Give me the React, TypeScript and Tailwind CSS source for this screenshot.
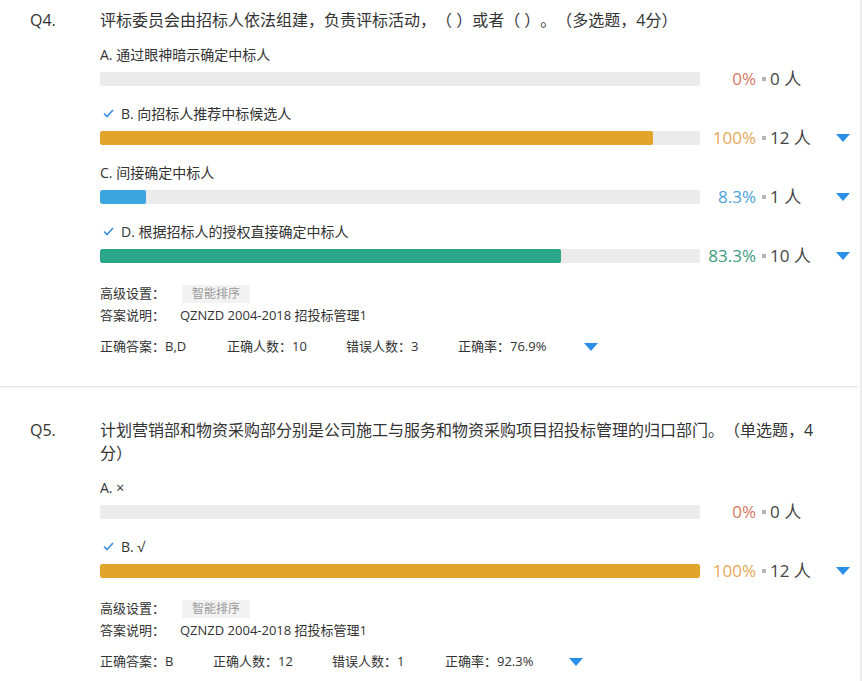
import { Fragment } from 'react'

type Option = {
  label: string
  correct: boolean
  fill: number
  barColor: string
  pct: string
  pctColor: string
  count: number
}

type Question = {
  no: string
  title: string
  options: Option[]
  answer: string
  stats: { text: string; w: string }[]
}

const questions: Question[] = [
  {
    no: 'Q4.',
    title: '评标委员会由招标人依法组建，负责评标活动，（ ）或者（ ）。（多选题，4分）',
    options: [
      { label: 'A. 通过眼神暗示确定中标人', correct: false, fill: 0, barColor: 'bg-[#e3a42b]', pct: '0%', pctColor: 'text-[#d6795f]', count: 0 },
      { label: 'B. 向招标人推荐中标候选人', correct: true, fill: 553, barColor: 'bg-[#e3a42b]', pct: '100%', pctColor: 'text-[#e6a85a]', count: 12 },
      { label: 'C. 间接确定中标人', correct: false, fill: 46, barColor: 'bg-[#3aa6dd]', pct: '8.3%', pctColor: 'text-[#4ba1d9]', count: 1 },
      { label: 'D. 根据招标人的授权直接确定中标人', correct: true, fill: 461, barColor: 'bg-[#2aa68a]', pct: '83.3%', pctColor: 'text-[#3a9c80]', count: 10 },
    ],
    answer: 'QZNZD 2004-2018 招投标管理1',
    stats: [
      { text: '正确答案：B,D', w: 'w-[127px]' },
      { text: '正确人数：10', w: 'w-[119px]' },
      { text: '错误人数：3', w: 'w-[112px]' },
      { text: '正确率：76.9%', w: 'w-[126px]' },
    ],
  },
  {
    no: 'Q5.',
    title: '计划营销部和物资采购部分别是公司施工与服务和物资采购项目招投标管理的归口部门。（单选题，4分）',
    options: [
      { label: 'A. ×', correct: false, fill: 0, barColor: 'bg-[#e3a42b]', pct: '0%', pctColor: 'text-[#d6795f]', count: 0 },
      { label: 'B. √', correct: true, fill: 600, barColor: 'bg-[#e3a42b]', pct: '100%', pctColor: 'text-[#e6a85a]', count: 12 },
    ],
    answer: 'QZNZD 2004-2018 招投标管理1',
    stats: [
      { text: '正确答案：B', w: 'w-[113px]' },
      { text: '正确人数：12', w: 'w-[119px]' },
      { text: '错误人数：1', w: 'w-[113px]' },
      { text: '正确率：92.3%', w: 'w-[124px]' },
    ],
  },
]

function CheckMark() {
  return (
    <svg width="11" height="9" viewBox="0 0 11 9" className="mr-[7px] ml-[3px]">
      <polyline points="1,4.5 4,7.5 10,1" fill="none" stroke="#3d8fe0" strokeWidth="1.7" />
    </svg>
  )
}

function Caret() {
  return (
    <svg width="14" height="8" viewBox="0 0 14 8">
      <polygon points="0,0 14,0 7,8" fill="#2b8fe8" />
    </svg>
  )
}

function OptionRow({ o, first }: { o: Option; first: boolean }) {
  return (
    <div className={first ? '' : 'mt-[9px]'}>
      <div className="flex items-center h-5 text-[14px] text-[#333]">
        {o.correct && <CheckMark />}
        <span>{o.label}</span>
      </div>
      <div className="flex items-center h-[30px]">
        <div className="w-[600px] h-[14px] bg-[#ebebeb] rounded-[2px] overflow-hidden">
          {o.fill > 0 && <div className={`h-full rounded-[2px] ${o.barColor}`} style={{ width: o.fill }} />}
        </div>
        <span className={`w-[56px] text-right text-[17px] ${o.pctColor}`}>{o.pct}</span>
        <span className="ml-[6px] w-[4px] h-[4px] bg-[#b5b5b5]" />
        <span className="ml-[4px] w-[66px] text-[17px] text-[#444]">{o.count} 人</span>
        {o.count > 0 && <Caret />}
      </div>
    </div>
  )
}

function QuestionBlock({ q }: { q: Question }) {
  return (
    <div className="flex pl-[30px]">
      <div className="w-[70px] text-[16px] leading-[23px] text-[#333]">{q.no}</div>
      <div className="flex-1">
        <p className="w-[722px] text-[16px] leading-[23px] text-[#333]">{q.title}</p>
        <div className="mt-[12px]">
          {q.options.map((o, i) => (
            <OptionRow key={o.label} o={o} first={i === 0} />
          ))}
        </div>
        <div className="mt-[12px] text-[13px] text-[#333]">
          <div className="flex items-center h-[22px]">
            <span className="w-[82px]">高级设置：</span>
            <span className="h-[18px] px-[10px] flex items-center bg-[#f2f2f2] text-[12px] text-[#999]">智能排序</span>
          </div>
          <div className="flex items-center h-[22px]">
            <span className="w-[80px]">答案说明：</span>
            <span>{q.answer}</span>
          </div>
          <div className="flex items-center h-[22px] mt-[9px]">
            {q.stats.map((s) => (
              <span key={s.text} className={s.w}>{s.text}</span>
            ))}
            <Caret />
          </div>
        </div>
      </div>
    </div>
  )
}

export default function App() {
  return (
    <div
      className="w-[862px] h-[681px] overflow-hidden bg-white flex [text-spacing-trim:space-all]"
      style={{ fontFamily: '"Open Sans", "Noto Sans CJK SC", sans-serif' }}
    >
      <div className="w-[860px]">
        {questions.map((q, i) => (
          <Fragment key={q.no}>
            {i > 0 && (
              <div className="mt-[28px] mb-[31px] w-[858px]">
                <div className="h-px bg-[#e4e4e4]" />
                <div className="h-px bg-[#f6f6f6]" />
              </div>
            )}
            <div className={i === 0 ? 'pt-[9px]' : ''}>
              <QuestionBlock q={q} />
            </div>
          </Fragment>
        ))}
      </div>
      <div className="w-[2px] h-full bg-[#ececec]" />
    </div>
  )
}
